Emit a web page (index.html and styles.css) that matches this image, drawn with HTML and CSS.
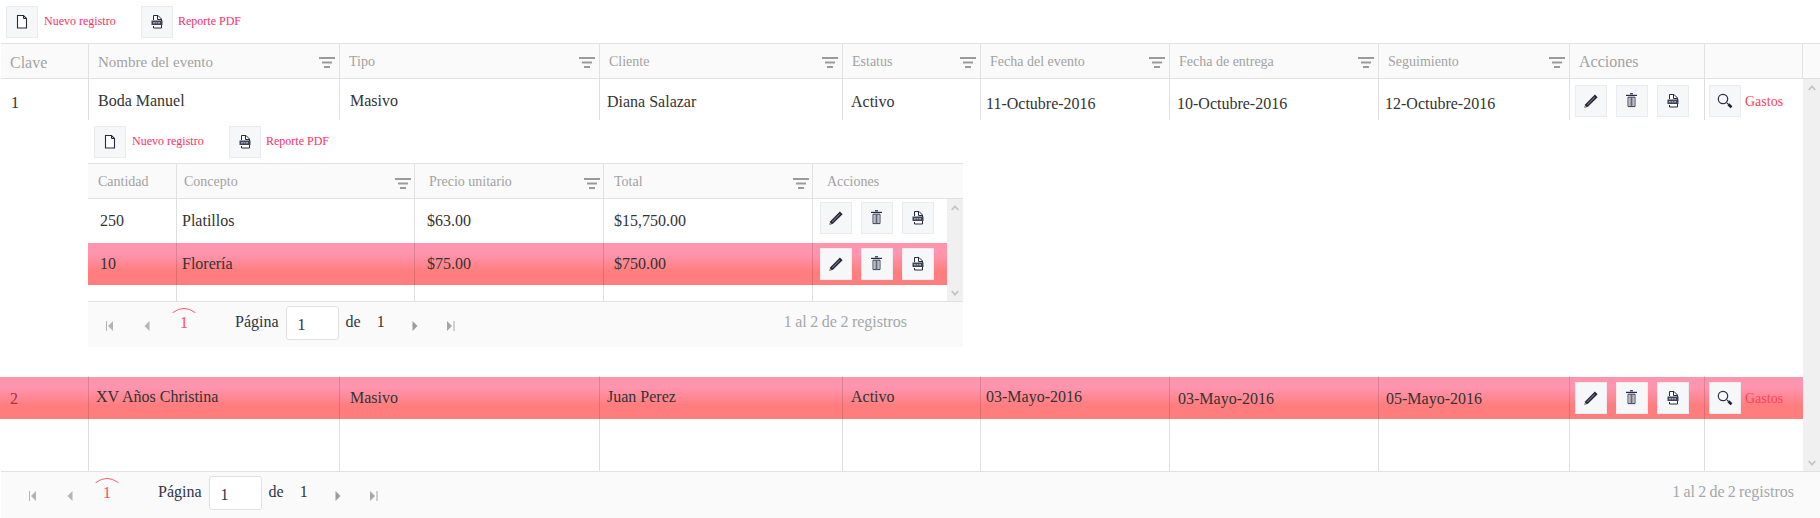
FILE: index.html
```html
<!DOCTYPE html>
<html lang="es">
<head>
<meta charset="utf-8">
<title>Eventos</title>
<link rel="stylesheet" href="styles.css">
</head>
<body>
<svg class="defs" width="0" height="0" aria-hidden="true">
  <symbol id="i-file" viewBox="0 0 18 18"><path d="M4.5 2.5h6l3 3v9.5h-9z" fill="#fff" stroke="#262a40" stroke-width="1.1"/><path d="M10.5 2.5v3h3" fill="none" stroke="#262a40"/></symbol>
  <symbol id="i-pdf" viewBox="0 0 18 18"><path d="M5.5 7V2.5h4.5l3.5 3.5v9h-8v-2" fill="#fff" stroke="#262a40"/><path d="M9.5 2.5v4h4" fill="none" stroke="#262a40"/><rect x="3.5" y="7.5" width="11" height="4.5" fill="#3d4358"/><rect x="5" y="9.2" width="1.8" height="1.2" fill="#c3c7d0"/><rect x="7.6" y="9.2" width="1.8" height="1.2" fill="#c3c7d0"/><rect x="10.2" y="9.2" width="1.8" height="1.2" fill="#c3c7d0"/></symbol>
  <symbol id="i-pen" viewBox="0 0 18 18"><path d="M2.4 15.8l.9-3.6 9.6-9.7 2.7 2.7-9.7 9.6z" fill="#23263a"/><path d="M4.8 12.4l7.6-7.6.8.8-7.6 7.6z" fill="#6d7183"/><path d="M2.4 15.8l.6-2.6 2 2z" fill="#c49a68"/></symbol>
  <symbol id="i-trash" viewBox="0 0 18 18"><rect x="3" y="2.8" width="11" height="1.2" fill="#262a44"/><rect x="7" y="1.2" width="3" height="1.2" fill="#262a44"/><path d="M5 5.2h7V14.6H5z" fill="none" stroke="#262a44" stroke-width=".9"/><path d="M7.1 5.5V14M8.5 5.5V14M9.9 5.5V14" stroke="#262a44" stroke-width=".7"/></symbol>
  <symbol id="i-search" viewBox="0 0 18 18"><circle cx="7" cy="7" r="4.7" fill="none" stroke="#2a2e48" stroke-width="1.2"/><path d="M11 11l1.2 1.2" stroke="#2a2e48" stroke-width="1.2"/><path d="M12.3 12.3l3.2 3" stroke="#1d2030" stroke-width="2.6"/></symbol>
  <symbol id="i-filter" viewBox="0 0 16 11"><rect width="16" height="2" y="0" fill="#9b9b9b"/><rect x="3" y="4.5" width="10" height="2" fill="#9b9b9b"/><rect x="5" y="9" width="6" height="2" fill="#9b9b9b"/></symbol>
  <symbol id="i-first" viewBox="0 0 8 10"><rect width="1" height="10" x="0" fill="currentColor"/><path d="M7 0v10L2 5z" fill="currentColor"/></symbol>
  <symbol id="i-prev" viewBox="0 0 6 10"><path d="M5.5 0v10L.5 5z" fill="currentColor"/></symbol>
  <symbol id="i-next" viewBox="0 0 6 10"><path d="M.5 0v10l5-5z" fill="currentColor"/></symbol>
  <symbol id="i-last" viewBox="0 0 8 10"><path d="M0 0v10l5-5z" fill="currentColor"/><rect width="1" height="10" x="6.5" fill="currentColor"/></symbol>
  <symbol id="i-up" viewBox="0 0 8 6"><path d="M.7 5L4 1.4 7.3 5" fill="none" stroke="#c4c4c4" stroke-width="1.8"/></symbol>
  <symbol id="i-down" viewBox="0 0 8 6"><path d="M.7 1L4 4.6 7.3 1" fill="none" stroke="#c4c4c4" stroke-width="1.8"/></symbol>
  <symbol id="i-arc" viewBox="0 0 24 6"><path d="M.5 5.8Q12-3 23.5 5.8" fill="none" stroke="#ff5a70"/></symbol>
</svg>

<div class="toolbar">
  <a class="tool"><span class="btn"><svg class="ico"><use href="#i-file"/></svg></span><span class="tool-label">Nuevo registro</span></a>
  <a class="tool"><span class="btn"><svg class="ico"><use href="#i-pdf"/></svg></span><span class="tool-label">Reporte PDF</span></a>
</div>

<div class="grid">
  <div class="head cols-main">
    <div class="hcell big">Clave</div>
    <div class="hcell large">Nombre del evento<svg class="filter"><use href="#i-filter"/></svg></div>
    <div class="hcell">Tipo<svg class="filter"><use href="#i-filter"/></svg></div>
    <div class="hcell">Cliente<svg class="filter"><use href="#i-filter"/></svg></div>
    <div class="hcell">Estatus<svg class="filter"><use href="#i-filter"/></svg></div>
    <div class="hcell">Fecha del evento<svg class="filter"><use href="#i-filter"/></svg></div>
    <div class="hcell">Fecha de entrega<svg class="filter"><use href="#i-filter"/></svg></div>
    <div class="hcell">Seguimiento<svg class="filter"><use href="#i-filter"/></svg></div>
    <div class="hcell big actions-head">Acciones</div>
    <div class="hcell"></div>
    <div class="hcell last"></div>
  </div>

  <div class="body">
    <div class="rows">
      <div class="row row-main cols-main-body">
        <div class="cell pt14 pl10">1</div>
        <div class="cell pt12 pl9">Boda Manuel</div>
        <div class="cell pt12 pl10">Masivo</div>
        <div class="cell pt13 pl7">Diana Salazar</div>
        <div class="cell pt13 pl8">Activo</div>
        <div class="cell pt15 pl5">11-Octubre-2016</div>
        <div class="cell pt15 pl7">10-Octubre-2016</div>
        <div class="cell pt15 pl6">12-Octubre-2016</div>
        <div class="cell actions pl5">
          <span class="btn"><svg class="ico"><use href="#i-pen"/></svg></span>
          <span class="btn"><svg class="ico"><use href="#i-trash"/></svg></span>
          <span class="btn"><svg class="ico"><use href="#i-pdf"/></svg></span>
        </div>
        <div class="cell actions gastos-cell">
          <span class="btn"><svg class="ico"><use href="#i-search"/></svg></span><span class="gastos">Gastos</span>
        </div>
      </div>

      <div class="detail">
        <div class="toolbar">
          <a class="tool"><span class="btn"><svg class="ico"><use href="#i-file"/></svg></span><span class="tool-label">Nuevo registro</span></a>
          <a class="tool"><span class="btn"><svg class="ico"><use href="#i-pdf"/></svg></span><span class="tool-label">Reporte PDF</span></a>
        </div>
        <div class="subgrid">
          <div class="head cols-sub-head">
            <div class="hcell sub pl10">Cantidad</div>
            <div class="hcell sub pl7">Concepto<svg class="filter"><use href="#i-filter"/></svg></div>
            <div class="hcell sub pl14">Precio unitario<svg class="filter"><use href="#i-filter"/></svg></div>
            <div class="hcell sub pl10">Total<svg class="filter"><use href="#i-filter"/></svg></div>
            <div class="hcell sub pl14 last">Acciones</div>
          </div>
          <div class="body">
            <div class="rows">
              <div class="row row-sub1 cols-sub">
                <div class="cell pt12 pl12">250</div>
                <div class="cell pt12 pl5">Platillos</div>
                <div class="cell pt12 pl12">$63.00</div>
                <div class="cell pt12 pl10">$15,750.00</div>
                <div class="cell actions pl7 pt3 last">
                  <span class="btn"><svg class="ico"><use href="#i-pen"/></svg></span>
                  <span class="btn"><svg class="ico"><use href="#i-trash"/></svg></span>
                  <span class="btn"><svg class="ico"><use href="#i-pdf"/></svg></span>
                </div>
              </div>
              <div class="row row-sub2 pink cols-sub">
                <div class="cell pt11 pl12">10</div>
                <div class="cell pt11 pl5">Florería</div>
                <div class="cell pt11 pl12">$75.00</div>
                <div class="cell pt11 pl10">$750.00</div>
                <div class="cell actions pl7 pt5 last">
                  <span class="btn"><svg class="ico"><use href="#i-pen"/></svg></span>
                  <span class="btn"><svg class="ico"><use href="#i-trash"/></svg></span>
                  <span class="btn"><svg class="ico"><use href="#i-pdf"/></svg></span>
                </div>
              </div>
              <div class="row row-sub3 cols-sub">
                <div class="cell"></div><div class="cell"></div><div class="cell"></div><div class="cell"></div><div class="cell last"></div>
              </div>
            </div>
            <div class="scroll scroll-sub"><svg class="chev"><use href="#i-up"/></svg><svg class="chev"><use href="#i-down"/></svg></div>
          </div>
          <div class="pager pager-sub">
            <svg class="arrow a-first"><use href="#i-first"/></svg>
            <svg class="arrow a-prev"><use href="#i-prev"/></svg>
            <span class="page"><svg class="arc"><use href="#i-arc"/></svg><span class="page-num">1</span></span>
            <span class="p-label">Página</span>
            <span class="p-input">1</span>
            <span class="p-de">de</span>
            <span class="p-total">1</span>
            <svg class="arrow a-next"><use href="#i-next"/></svg>
            <svg class="arrow a-last"><use href="#i-last"/></svg>
            <span class="p-info">1 al 2 de 2 registros</span>
          </div>
        </div>
      </div>

      <div class="row row-second pink-top cols-main-body">
        <div class="cell pt13 pl9 num-pink">2</div>
        <div class="cell pt11 pl7">XV Años Christina</div>
        <div class="cell pt12 pl10">Masivo</div>
        <div class="cell pt11 pl7">Juan Perez</div>
        <div class="cell pt11 pl8">Activo</div>
        <div class="cell pt11 pl5">03-Mayo-2016</div>
        <div class="cell pt13 pl8">03-Mayo-2016</div>
        <div class="cell pt13 pl7">05-Mayo-2016</div>
        <div class="cell actions pl5">
          <span class="btn"><svg class="ico"><use href="#i-pen"/></svg></span>
          <span class="btn"><svg class="ico"><use href="#i-trash"/></svg></span>
          <span class="btn"><svg class="ico"><use href="#i-pdf"/></svg></span>
        </div>
        <div class="cell actions gastos-cell">
          <span class="btn"><svg class="ico"><use href="#i-search"/></svg></span><span class="gastos">Gastos</span>
        </div>
      </div>

      <div class="row row-fill cols-main-body">
        <div class="cell"></div><div class="cell"></div><div class="cell"></div><div class="cell"></div><div class="cell"></div>
        <div class="cell"></div><div class="cell"></div><div class="cell"></div><div class="cell"></div><div class="cell last"></div>
      </div>
    </div>
    <div class="scroll scroll-main"><svg class="chev"><use href="#i-up"/></svg><svg class="chev"><use href="#i-down"/></svg></div>
  </div>

  <div class="pager pager-main">
    <svg class="arrow a-first"><use href="#i-first"/></svg>
    <svg class="arrow a-prev"><use href="#i-prev"/></svg>
    <span class="page"><svg class="arc"><use href="#i-arc"/></svg><span class="page-num">1</span></span>
    <span class="p-label">Página</span>
    <span class="p-input">1</span>
    <span class="p-de">de</span>
    <span class="p-total">1</span>
    <svg class="arrow a-next"><use href="#i-next"/></svg>
    <svg class="arrow a-last"><use href="#i-last"/></svg>
    <span class="p-info">1 al 2 de 2 registros</span>
  </div>
</div>
</body>
</html>
```

FILE: styles.css
```css
* { box-sizing: border-box; }
html, body { margin: 0; padding: 0; }
body {
  width: 1820px;
  height: 518px;
  overflow: hidden;
  background: #fff;
  color: #333;
  font-family: "Liberation Serif", "Times New Roman", serif;
  font-size: 16px;
  line-height: 20px;
}
.defs { display: block; height: 0; }

/* toolbar */
.toolbar { display: flex; height: 43px; padding: 6px 0 0 6px; gap: 25px; }
.tool { display: flex; gap: 6px; align-items: center; height: 32px; }
.tool + .tool { gap: 5px; }
.tool-label { font-size: 12px; color: #ff2f68; width: 72px; white-space: nowrap; margin-top: -2px; }
.tool + .tool .tool-label { width: auto; }
.btn {
  display: flex; align-items: center; justify-content: center;
  flex: none; width: 32px; height: 32px;
  background: #f5f7f9; border: 1px solid #e9ebee;
}
.ico { width: 18px; height: 18px; display: block; }

/* grid */
.grid { margin-left: 1px; }
.head {
  display: grid; height: 36px;
  background: #fafafa;
  border-top: 1px solid #e1e1e1; border-bottom: 1px solid #e1e1e1;
}
.cols-main-body { grid-template-columns: 88px 251px 260px 243px 138px 189px 209px 191px 135px 98px; }
.cols-main { grid-template-columns: 88px 251px 260px 243px 138px 189px 209px 191px 135px 98px 17px; }
.cols-sub-head { grid-template-columns: 89px 238px 189px 209px 150px; }
.cols-sub { grid-template-columns: 89px 238px 189px 209px 134px; }

.hcell {
  display: flex; justify-content: space-between; align-items: flex-start;
  padding: 8px 4px 0 9px;
  font-size: 14px; color: #a2a2a2; white-space: nowrap;
  border-right: 1px solid #e1e1e1;
}
.hcell.large { font-size: 15px; }
.hcell.big { font-size: 16px; padding-top: 9px; }
.hcell.actions-head { padding-top: 8px; }
.hcell.sub { padding-top: 8px; padding-right: 3px; }
.hcell.last, .cell.last { border-right: 0; }
.filter { width: 16px; height: 11px; margin-top: 5px; flex: none; }
.hcell.sub .filter { margin-top: 6px; }

.body { display: flex; }
.rows { flex: 1; min-width: 0; }
.row { display: grid; }
.cell { border-right: 1px solid rgba(0,0,0,.13); white-space: nowrap; min-width: 0; }
.row-main { height: 41px; }
.row-second { height: 43px; margin-left: -1px; padding-left: 1px; }
.row-fill { height: 52px; }
.row-sub1 { height: 44px; }
.row-sub2 { height: 42px; }
.row-sub3 { height: 16px; }

.pink { background: linear-gradient(#ff94ae 0, #ff94ae 11px, #ff7d7c 29px, #ff7d7c 42px); }
.pink-top { background: linear-gradient(#fff 0, #fff 1px, #ff94ae 1px, #ff94ae 12px, #ff7d7c 30px, #ff7d7c 43px); }
.num-pink { color: #a8324e; }

.pt3 { padding-top: 3px; } .pt5 { padding-top: 5px; }
.pt11 { padding-top: 11px; } .pt12 { padding-top: 12px; } .pt13 { padding-top: 13px; }
.pt14 { padding-top: 14px; } .pt15 { padding-top: 15px; }
.pl5 { padding-left: 5px; } .pl6 { padding-left: 6px; } .pl7 { padding-left: 7px; }
.pl8 { padding-left: 8px; } .pl9 { padding-left: 9px; } .pl10 { padding-left: 10px; }
.pl12 { padding-left: 12px; } .pl14 { padding-left: 14px; }

.actions { display: flex; gap: 9px; align-items: flex-start; }
.row-main .actions, .row-second .actions { padding-top: 6px; }
.gastos-cell { gap: 4px; padding-left: 4px; border-right: 0; }
.gastos { font-size: 14px; color: #ff4058; margin-top: 7px; }

/* detail */
.detail { height: 256px; padding-left: 87px; background: #fff; }
.subgrid { width: 875px; }

/* scrollbars */
.scroll {
  display: flex; flex-direction: column; justify-content: space-between; align-items: center;
  flex: none; background: #f0f0f0;
}
.scroll-main { width: 17px; padding: 6px 0 5px; }
.scroll-sub { width: 16px; padding: 6px 0 5px; }
.chev { width: 8px; height: 6px; display: block; }

/* pager */
.pager {
  display: flex; align-items: center;
  height: 46px; padding-bottom: 3px;
  background: #fafafa;
  border-top: 1px solid #e1e1e1;
  color: #333;
}
.pager-main { height: 47px; padding: 0 26px 4px 28px; }
.pager-sub { padding-left: 18px; padding-right: 56px; }
.arrow { flex: none; height: 10px; margin-top: 6px; color: #b4b4b4; }
.a-first { width: 8px; }
.a-prev { width: 6px; margin-left: 30px; }
.a-next { width: 6px; margin-left: 27px; color: #9c9c9c; }
.a-last { width: 8px; margin-left: 29px; color: #a6a6a6; }
.page { display: flex; flex-direction: column; align-items: center; width: 24px; margin-left: 22px; padding-bottom: 6px; }
.arc { width: 24px; height: 6px; margin-bottom: 0; }
.page-num { color: #ff4d61; }
.p-label { margin: -2px 0 0 39px; color: #2f3348; }
.p-input {
  width: 53px; height: 34px; margin-left: 7px; padding: 8px 0 0 11px;
  background: #fff; border: 1px solid #e1e1e1; border-radius: 3px;
  color: #2f3348;
}
.p-de { margin: -2px 0 0 7px; color: #2f3348; }
.p-total { margin: -2px 0 0 16px; }
.p-info { margin: -2px 0 0 auto; color: #a5a7ab; white-space: nowrap; word-spacing: -.5px; }
.pager-main .p-info { word-spacing: -.8px; }
```
